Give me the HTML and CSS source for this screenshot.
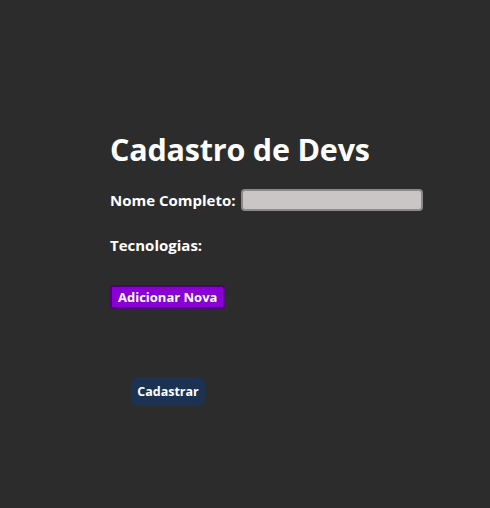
FILE: index.html
```html
<!DOCTYPE html>
<html lang="pt">
<head>
<meta charset="utf-8">
<title>Cadastro de Devs</title>
<link rel="stylesheet" href="styles.css">
</head>
<body>
<main class="page">
  <h1 class="title">Cadastro de Devs</h1>
  <form class="form">
    <div class="field">
      <label class="label" for="nome">Nome Completo:</label>
      <input class="input" id="nome" type="text">
    </div>
    <div class="techs">
      <span class="label">Tecnologias:</span>
    </div>
    <button type="button" class="btn-add">Adicionar Nova</button>
    <div class="submit-row">
      <button type="submit" class="btn-submit">Cadastrar</button>
    </div>
  </form>
</main>
</body>
</html>
```

FILE: styles.css
```css
html, body {
  margin: 0;
  padding: 0;
  background: #2c2c2c;
  height: 100%;
}
body {
  font-family: "Open Sans", "Noto Sans", sans-serif;
  color: #ffffff;
}
.page {
  padding: 127px 0 0 110px;
}
.title {
  margin: 0;
  font-size: 30.5px;
  font-weight: 700;
  line-height: 44px;
  letter-spacing: -0.2px;
}
.form {
  display: flex;
  flex-direction: column;
  align-items: flex-start;
  margin-top: 18px;
}
.field {
  display: flex;
  align-items: center;
  gap: 5px;
}
.label {
  font-size: 15px;
  font-weight: 700;
  letter-spacing: 0;
}
.input {
  width: 178px;
  height: 18px;
  margin: 0;
  padding: 0;
  border: 2px solid #8a8a8a;
  border-radius: 4px;
  background: #cac6c6;
}
.techs {
  margin-top: 24px;
  height: 20px;
  display: flex;
  align-items: center;
}
.btn-add {
  margin-top: 30px;
  height: 24px;
  padding: 0 6px;
  font-family: inherit;
  font-size: 13px;
  font-weight: 700;
  color: #ffffff;
  background: #8a00d4;
  border: 2px solid #4c0075;
  border-radius: 3px;
  line-height: 18px;
}
.submit-row {
  margin-top: 68px;
  padding-left: 21px;
}
.btn-submit {
  width: 74px;
  height: 29px;
  padding: 0;
  font-family: inherit;
  font-size: 12.5px;
  font-weight: 700;
  color: #ffffff;
  background: #1b3252;
  border: none;
  border-radius: 8px;
}
```
